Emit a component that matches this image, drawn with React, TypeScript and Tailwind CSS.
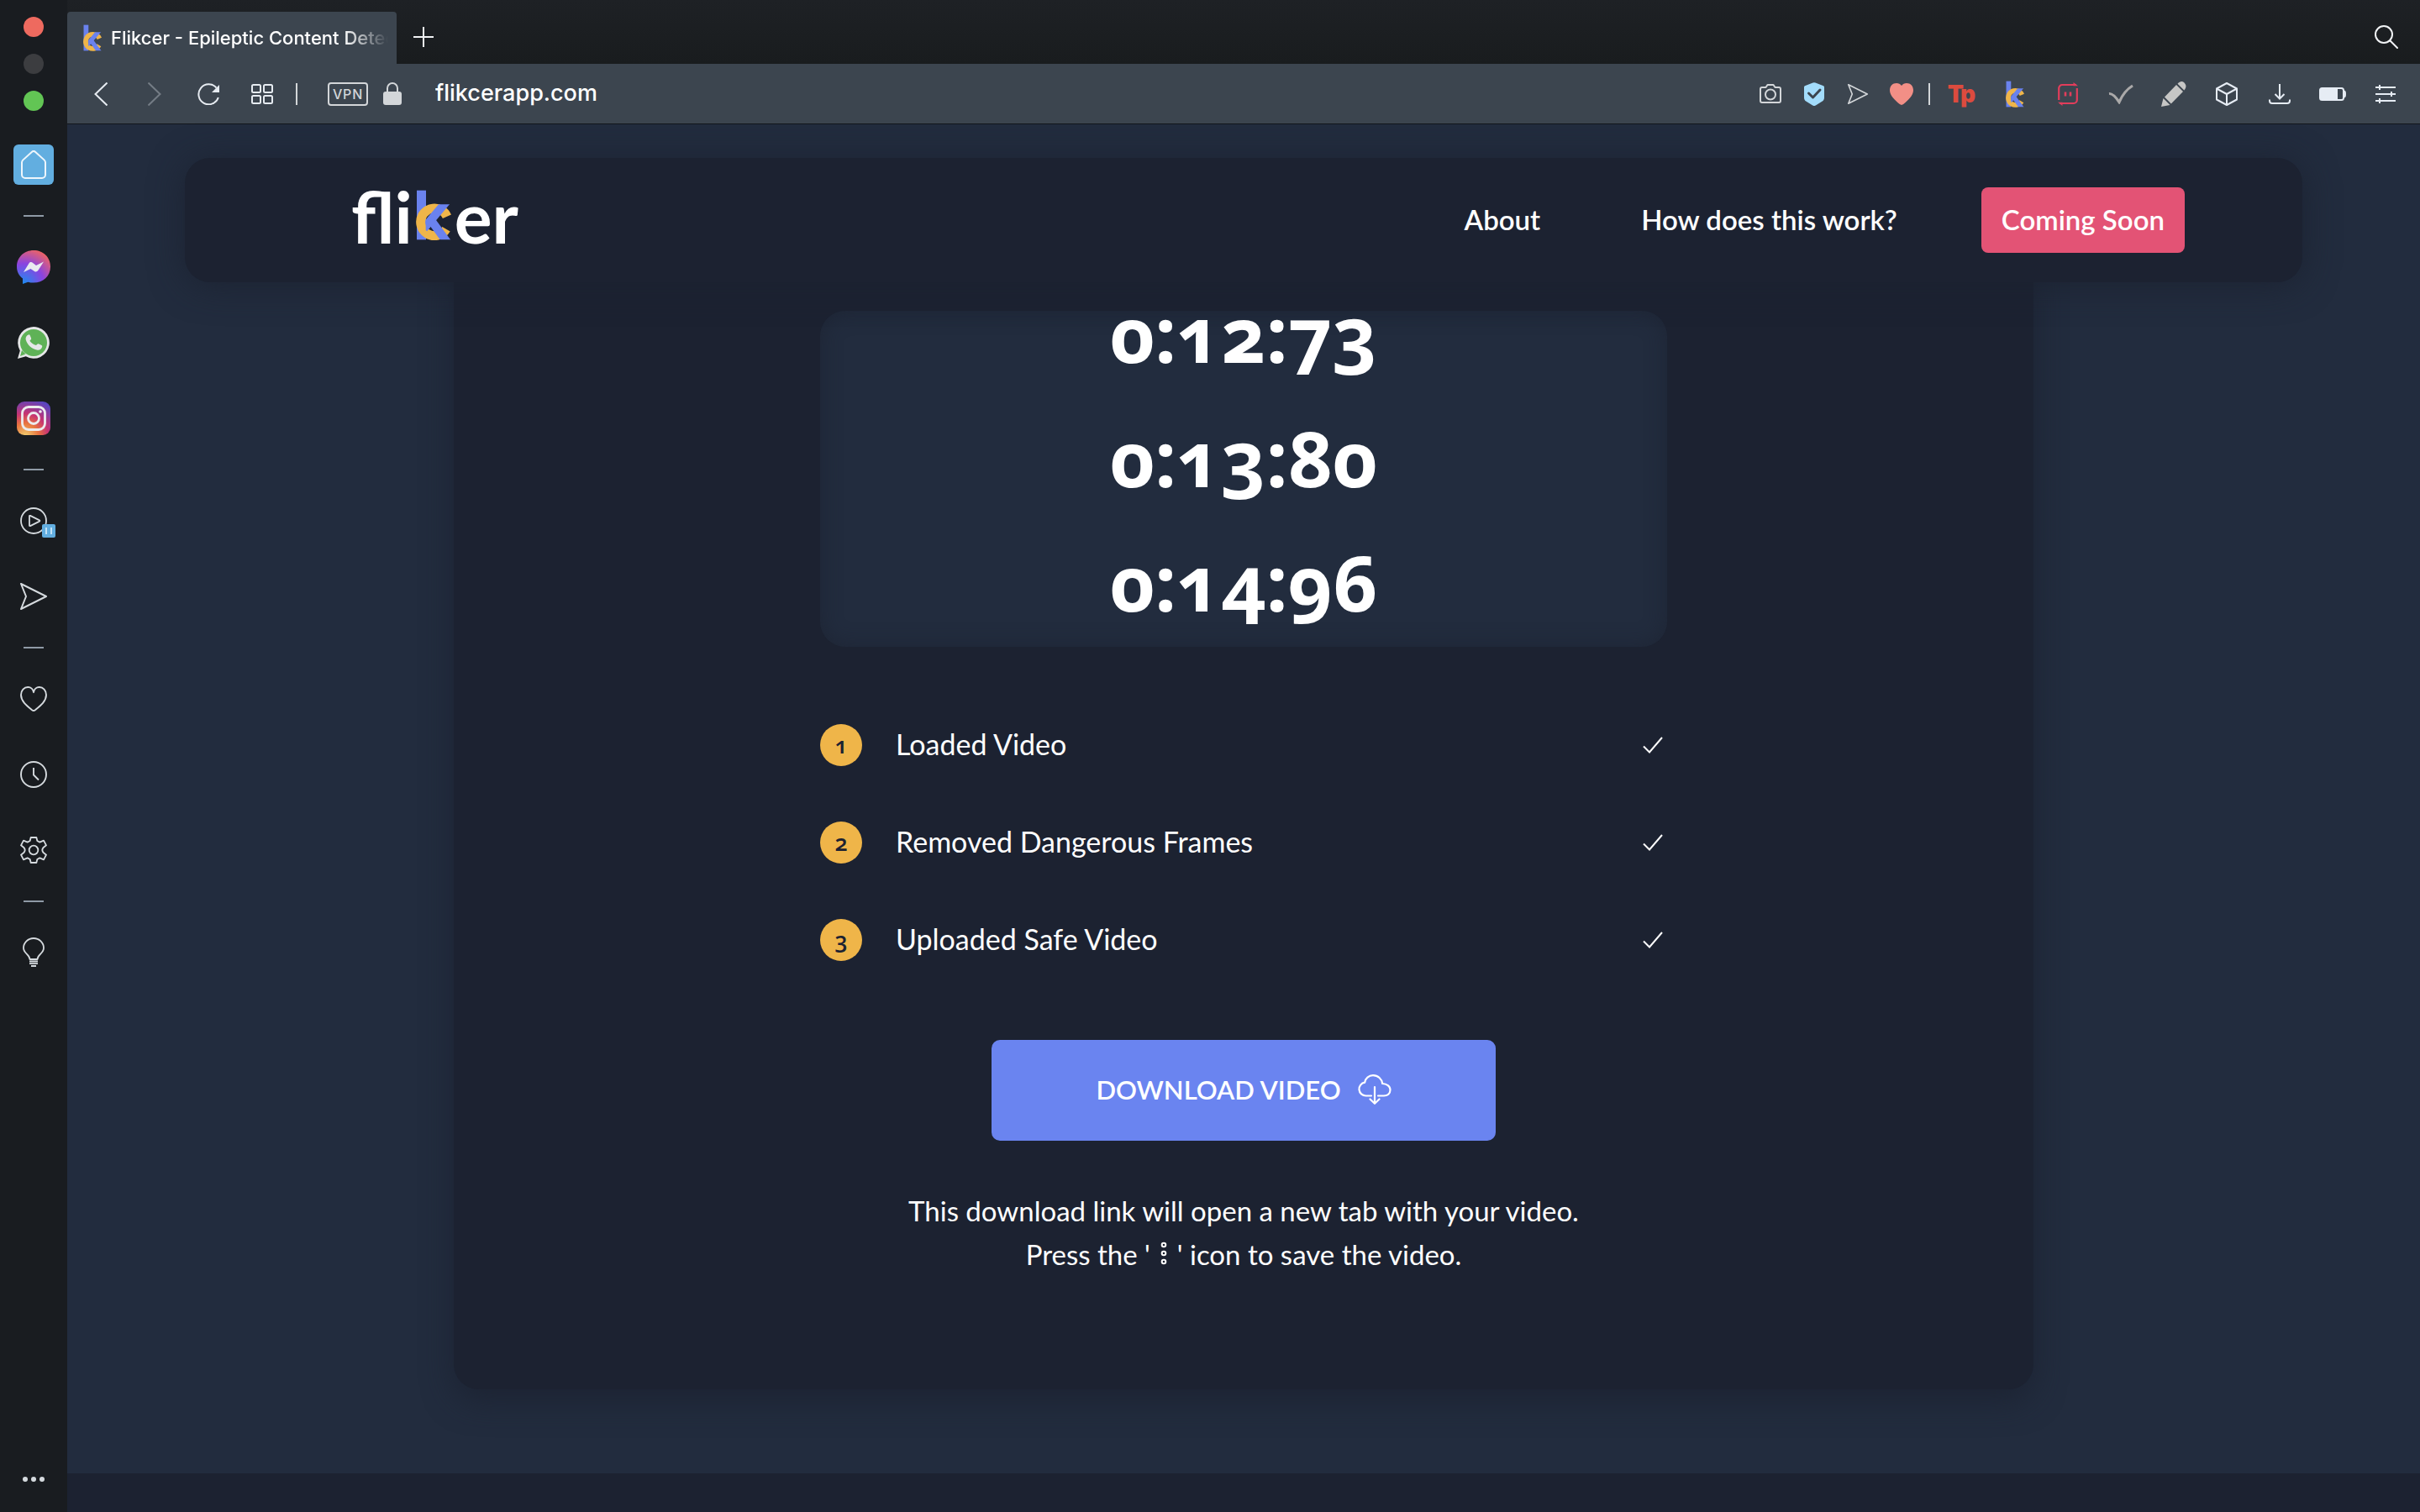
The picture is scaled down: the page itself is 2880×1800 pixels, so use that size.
import type { ReactNode } from 'react';

const timestamps = ['0:12:73', '0:13:80', '0:14:96'];
const steps = ['Loaded Video', 'Removed Dangerous Frames', 'Uploaded Safe Video'];

type IconProps = { className?: string };

function KcMark({ className = '' }: IconProps) {
  return (
    <svg viewBox="0 0 126 180" className={className} aria-hidden="true">
      <clipPath id="kc-arms">
        <rect x="35" y="52" width="91" height="126" />
      </clipPath>
      <rect x="3" y="2" width="33" height="176" fill="#6a82ee" />
      <circle cx="66" cy="115" r="49" fill="none" stroke="#efb549" strokeWidth="33" pathLength="360" strokeDasharray="304 56" transform="rotate(31 66 115)" />
      <g clipPath="url(#kc-arms)" stroke="#6a82ee" strokeWidth="30">
        <line x1="117" y1="32" x2="28" y2="138" />
        <line x1="50" y1="103" x2="120" y2="199" />
      </g>
    </svg>
  );
}

function SendIcon({ className = '' }: IconProps) {
  return (
    <svg viewBox="0 0 32 32" fill="none" stroke="currentColor" strokeLinejoin="round" className={className}>
      <path d="M1 1 31 16 1 31 7 16Z" />
    </svg>
  );
}

function MessengerIcon() {
  return (
    <svg viewBox="0 0 40 40" className="size-10">
      <defs>
        <radialGradient id="msgr" cx="0.2" cy="1" r="1.1">
          <stop offset="0" stopColor="#1c8df0" />
          <stop offset="0.55" stopColor="#8a43e0" />
          <stop offset="1" stopColor="#ef6462" />
        </radialGradient>
      </defs>
      <path d="M20 0C8.700 0 0 8.300 0 19.400c0 5.800 2.600 10.800 7 14.200V40l6.300-2.300c2.100.6 4.300.9 6.700.9 11.300 0 20-8 20-19.200S31.300 0 20 0Z" fill="url(#msgr)" />
      <path d="m8 26 6.500-10.500c1-1.500 3-1.800 4.300-.8l4.200 3.200 9-4.400-6.700 10.600c-1 1.500-3 1.900-4.300.8L16.500 22Z" fill="#e9eaf0" />
    </svg>
  );
}

function WhatsAppIcon() {
  return (
    <svg viewBox="0 0 38 38" className="size-[38px]">
      <path d="M0 38l2.800-9.600A18.800 18.800 0 1 1 9.800 35.300Z" fill="#e6e7e8" />
      <circle cx="19" cy="19" r="16" fill="#5fb257" />
      <path d="M3 35l2-7 4.500 4.500Z" fill="#5fb257" />
      <path transform="translate(8.500 8.500) scale(.9)" fill="#e6e7e8" d="M15 15l1.500-1.500a2 2 0 0 1 2.200-.3l3.500 1.900c.8.5 1 1.300.7 2.200-.8 2.800-3.400 4.500-6.200 4C8.500 19.800 3.200 14 1.300 7.500.7 4.500 2.300 1.700 5 1c.9-.2 1.600.1 1.900.9L8.400 5.500c.3.8.1 1.500-.4 2.100L6.600 9.200c1.800 3 4.800 5 8.400 5.800Z" />
    </svg>
  );
}

function InstagramIcon() {
  return (
    <svg viewBox="0 0 40 40" className="size-10" fill="none">
      <defs>
        <radialGradient id="insta" cx="0.25" cy="1.05" r="1.15">
          <stop offset="0" stopColor="#f3d572" />
          <stop offset="0.35" stopColor="#e8743f" />
          <stop offset="0.6" stopColor="#c73472" />
          <stop offset="1" stopColor="#5a45c0" />
        </radialGradient>
      </defs>
      <rect width="40" height="40" rx="9" fill="url(#insta)" />
      <rect x="6.500" y="6.500" width="27" height="27" rx="7.500" stroke="#ecebee" strokeWidth="2.800" />
      <circle cx="20" cy="20" r="6.500" stroke="#ecebee" strokeWidth="2.800" />
      <circle cx="28" cy="12" r="1.800" fill="#ecebee" />
    </svg>
  );
}

function SideItem({ label, children }: { label: string; children: ReactNode }) {
  return (
    <button type="button" aria-label={label} className="flex h-[90px] w-full items-center justify-center text-[#d5dade]">
      {children}
    </button>
  );
}

function SideRule() {
  return (
    <div className="flex h-8 items-center">
      <div className="h-0.5 w-6 bg-[#8f9aa6]" />
    </div>
  );
}

function Sidebar() {
  return (
    <aside className="flex w-20 shrink-0 flex-col items-center bg-[#191c20] pt-5 pb-9">
      <div className="mb-[19px] flex flex-col gap-5">
        <div className="size-6 rounded-full bg-[#ee6a5f]" />
        <div className="size-6 rounded-full bg-[#3c3d40]" />
        <div className="size-6 rounded-full bg-[#62c554]" />
      </div>
      <SideItem label="Home">
        <span className="flex size-12 items-center justify-center rounded-md bg-[#62aee0]">
          <svg viewBox="0 0 30 34" className="h-[34px] w-[30px]" fill="none" stroke="#eef6fc" strokeWidth="2">
            <path d="M1 14.500c0-1.200.4-2 1.200-2.900L12.800 1.900a3.200 3.200 0 0 1 4.400 0l10.600 9.700c.8.900 1.200 1.700 1.200 2.900V29a4 4 0 0 1-4 4H5a4 4 0 0 1-4-4Z" />
          </svg>
        </span>
      </SideItem>
      <SideRule />
      <SideItem label="Messenger"><MessengerIcon /></SideItem>
      <SideItem label="WhatsApp"><WhatsAppIcon /></SideItem>
      <SideItem label="Instagram"><InstagramIcon /></SideItem>
      <SideRule />
      <SideItem label="Player">
        <span className="relative">
          <svg viewBox="0 0 32 32" className="size-8" fill="none" stroke="currentColor" strokeWidth="1.800" strokeLinejoin="round">
            <circle cx="16" cy="16" r="15" />
            <path d="M11 10.500v11c0 .6.500.8 1 .6l11-5.500c.5-.3.5-.9 0-1.200L12 9.900c-.5-.2-1 0-1 .6Z" />
          </svg>
          <span className="absolute -right-2.5 -bottom-1 flex size-4 items-center justify-center gap-1 rounded-xs bg-[#62aee0]">
            <span className="h-2 w-0.5 bg-[#c4e3f7]" />
            <span className="h-2 w-0.5 bg-[#c4e3f7]" />
          </span>
        </span>
      </SideItem>
      <SideItem label="My Flow"><SendIcon className="size-8 stroke-2" /></SideItem>
      <SideRule />
      <SideItem label="Favourites">
        <svg viewBox="0 0 32 30" className="h-[30px] w-8" fill="none" stroke="currentColor" strokeWidth="1.900" strokeLinejoin="round">
          <path d="M16 7.200C15.400 3.600 12.600 1 9.300 1 4.700 1 1 4.800 1 10.300c0 7.500 6.700 12.700 13.100 17.900 1.300 1 2.500 1 3.800 0C24.300 23 31 17.800 31 10.300 31 4.800 27.300 1 22.700 1c-3.300 0-6.100 2.600-6.700 6.200Z" />
        </svg>
      </SideItem>
      <SideItem label="History">
        <svg viewBox="0 0 32 32" className="size-8" fill="none" stroke="currentColor" strokeWidth="1.900">
          <circle cx="16" cy="16" r="15" />
          <path d="M16 8v8.500l6 6" />
        </svg>
      </SideItem>
      <SideItem label="Settings">
        <svg viewBox="0 0 96 96" className="size-8" fill="none" stroke="currentColor" strokeWidth="5.500" strokeLinejoin="round">
          <path d="M38 3H58L61 15 70 20 84 14 93 31 82 40Q76 48 82 56L93 65 84 82 70 76 61 81 58 93H38L35 81 26 76 12 82 3 65 14 56Q20 48 14 40L3 31 12 14 26 20 35 15Z" />
          <circle cx="48" cy="48" r="16" />
        </svg>
      </SideItem>
      <SideRule />
      <SideItem label="Tips">
        <svg viewBox="0 0 26 36" className="h-9 w-[26px]" fill="none" stroke="currentColor" strokeWidth="1.800" strokeLinejoin="round">
          <path d="M8.500 26C8.500 20.500 1 19 1 12.500a12 11.500 0 0 1 24 0C25 19 17.500 20.500 17.500 26Z" />
          <path d="M8 28.500h10M8 31.200h10M10 34h6" />
        </svg>
      </SideItem>
      <button type="button" aria-label="More" className="mt-auto flex gap-1">
        <span className="size-1.5 rounded-full bg-[#d5dade]" />
        <span className="size-1.5 rounded-full bg-[#d5dade]" />
        <span className="size-1.5 rounded-full bg-[#d5dade]" />
      </button>
    </aside>
  );
}

function TabStrip() {
  return (
    <div className="flex h-[76px] items-end bg-linear-to-b from-[#1e2125] to-[#191c1e]">
      <div className="flex h-[62px] w-[392px] items-center rounded-t bg-[#3c454f] pr-2.5 pl-[19px]">
        <KcMark className="h-8 w-[22px] shrink-0" />
        <span className="ml-[11px] overflow-hidden text-[22px] font-medium whitespace-nowrap text-white [mask-image:linear-gradient(to_right,black_84%,transparent)]">
          Flikcer - Epileptic Content Detection
        </span>
      </div>
      <button type="button" aria-label="New tab" className="mb-5 ml-5 text-[#f1f3f5]">
        <svg viewBox="0 0 24 24" className="size-6" stroke="currentColor" strokeWidth="2">
          <path d="M12 0v24M0 12h24" />
        </svg>
      </button>
      <button type="button" aria-label="Search tabs" className="mr-[26px] mb-[18px] ml-auto text-[#f1f3f5]">
        <svg viewBox="0 0 28 28" className="size-7" fill="none" stroke="currentColor" strokeWidth="2" strokeLinecap="round">
          <circle cx="11" cy="11" r="10" />
          <path d="m18.500 18.500 8.500 8.500" />
        </svg>
      </button>
    </div>
  );
}

function NavCell({ label, children }: { label: string; children: ReactNode }) {
  return (
    <button type="button" aria-label={label} className="flex w-16 justify-center text-[#e6ebf1]">
      {children}
    </button>
  );
}

function BadgeCell({ label, children }: { label: string; children: ReactNode }) {
  return (
    <button type="button" aria-label={label} className="flex w-[52px] justify-center text-[#d3d6d9]">
      {children}
    </button>
  );
}

function ExtCell({ label, children }: { label: string; children: ReactNode }) {
  return (
    <button type="button" aria-label={label} className="flex w-[63px] justify-center text-[#e6ecf4]">
      {children}
    </button>
  );
}

function Toolbar() {
  return (
    <div className="flex h-[72px] items-center border-b border-[#12161c] bg-[#3c454f] pr-2.5 pl-2">
      <NavCell label="Back">
        <svg viewBox="0 0 16 28" className="h-7 w-4" fill="none" stroke="currentColor" strokeWidth="2">
          <path d="M15.500.5 1.500 14l14 13.500" />
        </svg>
      </NavCell>
      <NavCell label="Forward">
        <svg viewBox="0 0 16 28" className="h-7 w-4 text-[#747c85]" fill="none" stroke="currentColor" strokeWidth="2">
          <path d="M.5.5 14.500 14 .5 27.500" />
        </svg>
      </NavCell>
      <NavCell label="Reload">
        <svg viewBox="0 0 26 26" className="size-[26px]" fill="none" stroke="currentColor" strokeWidth="2">
          <path d="M24.800 17A12 12 0 1 1 22.500 5.500" />
          <path d="M26 2v9h-9Z" fill="currentColor" stroke="none" />
        </svg>
      </NavCell>
      <NavCell label="Speed dial">
        <svg viewBox="0 0 26 24" className="h-6 w-[26px]" fill="none" stroke="currentColor" strokeWidth="2">
          <rect x="1" y="1" width="10" height="9" rx="1.500" />
          <rect x="15" y="1" width="10" height="9" rx="1.500" />
          <rect x="1" y="14" width="10" height="9" rx="1.500" />
          <rect x="15" y="14" width="10" height="9" rx="1.500" />
        </svg>
      </NavCell>
      <div className="ml-2 h-[26px] w-0.5 bg-[#d3d6d9]" />
      <button type="button" className="ml-9 flex h-7 w-12 items-center justify-center rounded-sm border-2 border-[#d3d6d9] text-base font-medium tracking-wider text-[#d3d6d9]">
        VPN
      </button>
      <svg viewBox="0 0 22 28" className="ml-[18px] h-7 w-[22px] text-[#d3d6d9]" fill="none">
        <path d="M5 12V7a6 6 0 0 1 12 0v5" stroke="currentColor" strokeWidth="2" />
        <rect y="11" width="22" height="16" rx="3" fill="currentColor" />
      </svg>
      <input aria-label="Address" defaultValue="flikcerapp.com" className="ml-10 min-w-0 flex-1 bg-transparent text-[27px] font-medium text-white outline-none" />

      <BadgeCell label="Snapshot">
        <svg viewBox="0 0 26 23" className="h-[23px] w-[26px]" fill="none" stroke="currentColor" strokeWidth="2" strokeLinejoin="round">
          <path d="M3 4h4.500l2-3h7l2 3H23a2 2 0 0 1 2 2v14a2 2 0 0 1-2 2H3a2 2 0 0 1-2-2V6a2 2 0 0 1 2-2Z" />
          <circle cx="13" cy="12.500" r="6" />
        </svg>
      </BadgeCell>
      <BadgeCell label="Ad blocker">
        <svg viewBox="0 0 24 28" className="h-7 w-6">
          <path d="M10.500.5a4 4 0 0 1 3 0l9 3.500c1 .4 1.500 1 1.500 2v12c0 2-.6 3.400-2.200 4.600l-8 5c-1.200.6-2.400.6-3.600 0l-8-5C.6 21.400 0 20 0 18V6c0-1 .5-1.600 1.500-2Z" fill="#a3dcfb" />
          <path d="m5.500 13 5 5 8.500-9" fill="none" stroke="#3c454f" strokeWidth="3" strokeLinecap="round" strokeLinejoin="round" />
        </svg>
      </BadgeCell>
      <BadgeCell label="Send to My Flow"><SendIcon className="h-6 w-[26px] stroke-[2.2px]" /></BadgeCell>
      <BadgeCell label="Bookmark">
        <svg viewBox="0 0 28 26" className="h-[26px] w-7" fill="#f28f86">
          <path d="M14 3C12.600 1 10.500 0 8 0 3.400 0 0 3.400 0 8.500 0 15 6 20 11.800 25.100c1.400 1.100 3 1.100 4.400 0C22 20 28 15 28 8.500 28 3.400 24.600 0 20 0c-2.500 0-4.600 1-6 3Z" />
        </svg>
      </BadgeCell>
      <div className="mr-1.5 ml-1.5 h-[26px] w-0.5 shrink-0 bg-[#d3d6d9]" />
      <ExtCell label="Toolbox">
        <span className="flex font-[Inter] text-[28px] leading-7 font-black text-[#dd4b3e]">
          T<span className="-ml-1">p</span>
        </span>
      </ExtCell>
      <ExtCell label="Flikcer"><KcMark className="h-8 w-[22px]" /></ExtCell>
      <ExtCell label="Loop">
        <svg viewBox="0 0 24 28" className="h-7 w-6" fill="none" stroke="#e23d5b" strokeWidth="2.200">
          <path d="M1.200 21V7a4 4 0 0 1 4-4H22M22.800 7v14a4 4 0 0 1-4 4H2" />
          <path d="m18.500 0 5.500 4.200h-5.500ZM5.500 28 0 23.800h5.500Z" fill="#e23d5b" stroke="none" />
          <path d="M9 11.500v5M15 11.500v5" strokeWidth="2.600" />
        </svg>
      </ExtCell>
      <ExtCell label="Checker">
        <svg viewBox="0 0 30 24" className="h-6 w-[30px]" fill="none" stroke="#aaa9a9" strokeWidth="3.200">
          <path d="M1 11.500q5-.5 12 10Q19 8 29 2" />
        </svg>
      </ExtCell>
      <ExtCell label="Editor">
        <svg viewBox="0 0 30 30" className="size-[30px]" fill="#c6c6c5">
          <path d="M0 30 2.500 20l8 8ZM4 18.500 18 4l8 8L11.800 26.500ZM19.500 2.700C22.500-.8 25.500-.5 27.500 1.500s3.200 5.500-.2 9Z" />
        </svg>
      </ExtCell>
      <ExtCell label="Extensions">
        <svg viewBox="0 0 26 28" className="h-7 w-[26px]" fill="none" stroke="currentColor" strokeWidth="2" strokeLinejoin="round">
          <path d="m13 1 12 6.500v13L13 27 1 20.500v-13ZM1 7.500 13 14l12-6.500M13 14v13" />
        </svg>
      </ExtCell>
      <ExtCell label="Downloads">
        <svg viewBox="0 0 26 24" className="h-6 w-[26px]" fill="none" stroke="currentColor" strokeWidth="2">
          <path d="M13 0v17M7.500 12l5.500 5.500 5.500-5.500M1 18.500V20a3 3 0 0 0 3 3h18a3 3 0 0 0 3-3v-1.500" />
        </svg>
      </ExtCell>
      <ExtCell label="Battery saver">
        <svg viewBox="0 0 32 16" className="h-4 w-8">
          <rect x="1" y="1" width="28" height="14" rx="2.500" fill="none" stroke="currentColor" strokeWidth="2" />
          <rect x="1" y="1" width="21" height="14" fill="currentColor" />
          <path d="M30 3.500c1.300.5 2 1.500 2 4.500s-.7 4-2 4.500Z" fill="currentColor" />
        </svg>
      </ExtCell>
      <ExtCell label="Easy setup">
        <svg viewBox="0 0 24 22" className="h-[22px] w-6" stroke="currentColor" strokeWidth="2">
          <path d="M0 3h24M0 11h24M0 19h24M5 0v6M19 8v6M5 16v6" />
        </svg>
      </ExtCell>
    </div>
  );
}

function SiteHeader() {
  return (
    <header className="relative z-10 mx-[140px] mt-10 flex h-[148px] items-center rounded-[30px] bg-[#1c2231] pr-[140px] pl-[198px] shadow-[0_4px_40px_rgba(28,34,49,0.9)]">
      <a href="#home" aria-label="fliker" className="flex items-end pb-2 text-[84px] leading-[84px] font-bold">
        <span>fli</span>
        <KcMark className="mx-1 mb-3.5 h-[60px] w-[42px]" />
        <span>er</span>
      </a>
      <nav className="ml-auto flex items-center text-[33px] font-semibold">
        <a href="#about">About</a>
        <a href="#how" className="ml-[120px]">How does this work?</a>
        <a href="#soon" className="ml-[100px] flex h-[78px] items-center rounded-lg bg-[#e35375] px-6">Coming Soon</a>
      </nav>
    </header>
  );
}

function ResultCard() {
  return (
    <section className="mx-auto -mt-10 flex w-full max-w-[1880px] flex-col items-center rounded-[30px] bg-[#1c2231] pt-[74px] pb-[135px] shadow-[0_14px_36px_rgba(28,34,49,0.8)]">
      <div className="w-full max-w-[1008px]">
        <ul className="flex h-[400px] flex-col items-center justify-end gap-12 overflow-hidden rounded-[30px] bg-[#222c3e] pb-[27px] font-['Open_Sans'] text-[92px] leading-[100px] font-bold oldstyle-nums shadow-[inset_0_0_24px_rgba(28,34,49,0.7)]">
          {timestamps.map((time) => (
            <li key={time}>{time}</li>
          ))}
        </ul>

        <ol className="mt-[92px] flex flex-col gap-[66px]">
          {steps.map((step, i) => (
            <li key={step} className="flex h-[50px] items-center">
              <span className="flex size-[50px] items-center justify-center rounded-full bg-[#efb549] font-['Open_Sans'] text-[27px] font-semibold text-[#1c2231] oldstyle-nums">
                {i + 1}
              </span>
              <span className="ml-10 pb-1 text-[34px]">{step}</span>
              <svg viewBox="0 0 24 20" className="mr-[5px] ml-auto h-5 w-6" fill="none" stroke="currentColor" strokeWidth="2">
                <path d="m1 11.500 7 7L23 1" />
              </svg>
            </li>
          ))}
        </ol>
      </div>

      <button type="button" className="mt-[94px] flex h-[120px] w-[600px] items-center justify-center gap-5 rounded-[10px] bg-[#6a84f0] pb-0.5 text-[31px] font-semibold">
        DOWNLOAD VIDEO
        <svg viewBox="0 0 40 36" className="h-9 w-10" fill="none" stroke="currentColor" strokeWidth="2.200" strokeLinecap="round" strokeLinejoin="round">
          <path d="M16 25.500H9.500a8 8 0 0 1-1.300-15.900C8.800 4.800 13 1.200 18 1.200c6 0 10.500 4.300 11.200 9.800 5 .2 9.300 3 9.300 7.600 0 4.200-3.200 6.900-7.500 6.900h-7" />
          <path d="M20 15v19.500M14.500 29.500l5.500 5.300 5.500-5.300" />
        </svg>
      </button>

      <p className="mt-[57px] text-center text-[33px] leading-[52px]">
        This download link will open a new tab with your video.
        <br />
        Press the '
        <svg viewBox="0 0 8 28" className="mx-3 mb-3 inline h-7 w-2" fill="none" stroke="currentColor" strokeWidth="2">
          <circle cx="4" cy="4" r="2.300" />
          <circle cx="4" cy="14" r="2.300" />
          <circle cx="4" cy="24" r="2.300" />
        </svg>
        ' icon to save the video.
      </p>
    </section>
  );
}

export default function App() {
  return (
    <div className="flex min-h-screen bg-[#222c3e] font-[Inter,sans-serif]">
      <Sidebar />
      <div className="flex min-w-0 flex-1 flex-col">
        <TabStrip />
        <Toolbar />
        <main className="pb-[100px] font-[Lato,sans-serif] text-white">
          <SiteHeader />
          <ResultCard />
        </main>
        <footer className="flex-1 bg-[#1c2231]" />
      </div>
    </div>
  );
}
